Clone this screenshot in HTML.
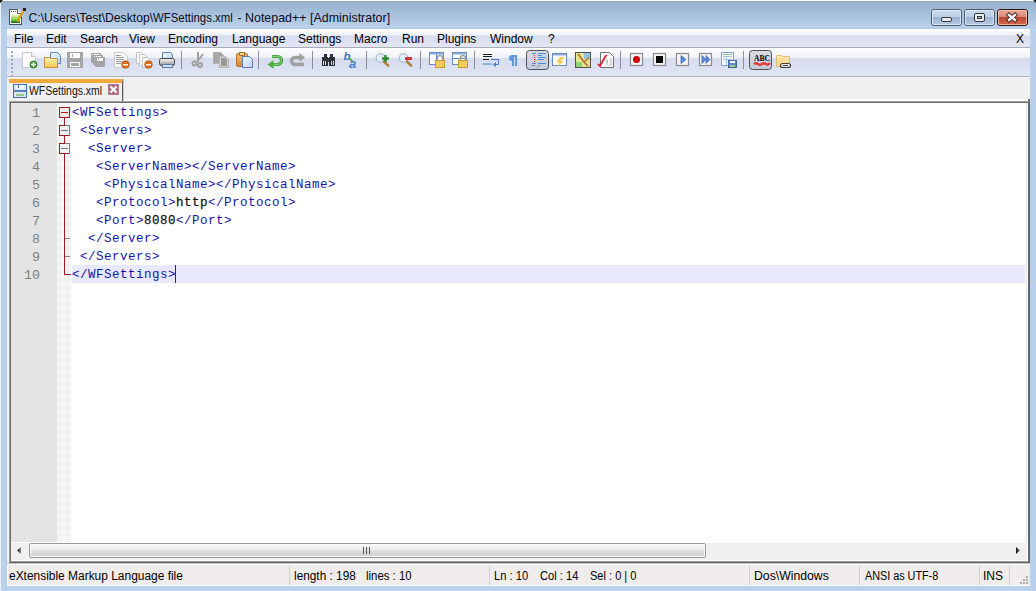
<!DOCTYPE html>
<html><head><meta charset="utf-8">
<style>
*{margin:0;padding:0;box-sizing:border-box}
html,body{width:1036px;height:591px;overflow:hidden}
body{position:relative;background:#b9d1ea;font-family:"Liberation Sans",sans-serif;font-size:12px;color:#000}
.a{position:absolute}
#title{left:0;top:0;width:1036px;height:29px;background:linear-gradient(#f8fafc 0,#f8fafc 1px,#98a9be 1px,#98a9be 2px,#97b0cd 2px,#b9d1ea 27px,#b0c8e2 28px,#b9d1ea 29px)}
#ttext{left:28.5px;top:11px;font-size:12.2px;color:#0b0b1e;white-space:nowrap;line-height:14px}
#menu{left:7px;top:29px;width:1023px;height:19px;background:linear-gradient(#fefefe 0,#eff1f7 6px,#d6dbee 7px,#e3e7f5 18px);border-bottom:1px solid #a9adb9}
#menu span{position:absolute;top:3.4px;line-height:14px;white-space:nowrap}
#tool{left:7px;top:48px;width:1023px;height:29px;background:linear-gradient(#ffffff 0,#eef0f7 10px,#d6dbee 10px,#e1e6f5 28px);border-bottom:1px solid #aeb2be}

#edit{left:9px;top:101px;width:1021px;height:462px;background:#fff;border-top:1px solid #a0a0a0;border-left:1px solid #a0a0a0;border-right:1px solid #5e646a;border-bottom:1px solid #646464}
#edit2{left:10px;top:102px;width:1019px;height:460px;border-top:1px solid #696969;border-left:1px solid #696969;border-right:1px solid #62676c;border-bottom:1px solid #a0a0a0}
#hscroll{left:11px;top:542px;width:1016px;height:18px;background:#f0f0f0;border-top:1px solid #fff}
#thumb{left:29px;top:543px;width:677px;height:15px;border:1px solid #979797;border-radius:2px;background:linear-gradient(#f7f7f7 0,#ececec 6px,#dadada 7px,#d2d2d2 13px);box-shadow:inset 0 0 0 1px #fafafa}
#status{left:7px;top:563px;width:1023px;height:23px;background:#f0ecec;border-top:1px solid #c4c4c4;box-shadow:inset 0 1px 0 #fbfbfb,inset 0 -1px 0 #fafafa,inset 1px 0 0 #fafafa}
#status span{position:absolute;top:5px;line-height:14px;white-space:nowrap}
.sep{position:absolute;top:1px;width:1px;height:20px;background:#d3d0cb}

#lnm{left:11px;top:103px;width:46px;height:439px;background:#e4e4e4}
#fold{left:57px;top:103px;width:14px;height:439px;background-color:#fff;background-image:repeating-conic-gradient(#ececec 0 25%,#fff 0 50%);background-size:2px 2px}
#code{left:72px;top:104px;font-family:"Liberation Mono",monospace;font-size:12.5px;letter-spacing:0.5px;line-height:18px;white-space:pre;color:#1414a8}
#code b{color:#111;font-weight:normal;-webkit-text-stroke:0.25px #111}
#lnum{left:11px;top:105px;width:29px;text-align:right;font-family:"Liberation Mono",monospace;font-size:13.33px;line-height:18px;white-space:pre;color:#808080}
#curl{left:72px;top:265px;width:953px;height:18px;background:#e8e8ff}
#caret{left:175px;top:265px;width:1px;height:18px;background:#3c12a4}

#tabbar{left:7px;top:77px;width:1023px;height:486px;background:#f0f0f0;border-top:1px solid #f2f2f2}
#tab{left:9px;top:79px;width:114px;height:22px;background:#f0f0f0;border-top:4px solid #f2a93b;border-right:1px solid #5c5c5c;box-shadow:1px 0 0 #c8c8c8}
#tabtext{left:29px;top:84px;line-height:14px;white-space:nowrap;transform:scaleX(0.87);transform-origin:0 0;color:#111}
.tt{top:11px;font-size:12.2px;color:#0b0b1e;white-space:nowrap;line-height:14px;transform-origin:0 0}
</style></head><body>
<div id="title" class="a"></div><svg class="a" style="left:0;top:0" width="1036" height="4"><path d="M0 0 H3 L0 3 Z" fill="#1a1a1a"/><path d="M1036 0 H1033 L1036 3 Z" fill="#1a1a1a"/></svg><div class="a" style="left:0;top:3px;width:1px;height:588px;background:#eaf2fa"></div><div class="a" style="left:7px;top:77px;width:1px;height:486px;background:#fff"></div>
<svg class="a" style="left:0;top:0" width="1036" height="29">
<defs>
<linearGradient id="gmin" x1="0" y1="0" x2="0" y2="1"><stop offset="0" stop-color="#cbdbed"/><stop offset="0.45" stop-color="#bccfe5"/><stop offset="0.46" stop-color="#98b2cf"/><stop offset="1" stop-color="#b9cde4"/></linearGradient>
<linearGradient id="gcls" x1="0" y1="0" x2="0" y2="1"><stop offset="0" stop-color="#eaa898"/><stop offset="0.45" stop-color="#dc8a78"/><stop offset="0.46" stop-color="#b9442a"/><stop offset="1" stop-color="#d86a50"/></linearGradient>
<linearGradient id="ggrn" x1="0" y1="0" x2="0" y2="1"><stop offset="0" stop-color="#e8f49a"/><stop offset="0.6" stop-color="#78d040"/><stop offset="1" stop-color="#106010"/></linearGradient>
</defs>

<g>
<rect x="931.5" y="9.5" width="30" height="16" rx="2.5" fill="url(#gmin)" stroke="#4f5d70"/>
<rect x="932.5" y="10.5" width="28" height="14" rx="1.5" fill="none" stroke="#e4eefa" stroke-opacity="0.8"/>
<rect x="941.5" y="17.5" width="10" height="4" rx="1.5" fill="#efeceb" stroke="#2e3440"/>
<rect x="964.5" y="9.5" width="30" height="16" rx="2.5" fill="url(#gmin)" stroke="#4f5d70"/>
<rect x="965.5" y="10.5" width="28" height="14" rx="1.5" fill="none" stroke="#e4eefa" stroke-opacity="0.8"/>
<rect x="974.5" y="13.5" width="10" height="8" rx="1.5" fill="#efeceb" stroke="#2e3440"/>
<rect x="977.5" y="16.5" width="4" height="2" fill="#b8c4d4" stroke="#2e3440"/>
<rect x="997.5" y="9.5" width="30" height="16" rx="2.5" fill="url(#gcls)" stroke="#2a1616"/>
<rect x="998.5" y="10.5" width="28" height="14" rx="1.5" fill="none" stroke="#f6c8b8" stroke-opacity="0.8"/>
<path d="M1009 15 L1015 20 M1015 15 L1009 20" stroke="#3a2020" stroke-width="4.2" stroke-linecap="square"/>
<path d="M1009 15 L1015 20 M1015 15 L1009 20" stroke="#f4f2f2" stroke-width="2.4" stroke-linecap="square"/>
</g>
<g>
<rect x="9.5" y="9.5" width="12" height="15" fill="#fff" stroke="#4a5058"/>
<path d="M17 9 L22 14 V9 Z" fill="#b6c8de"/>
<path d="M17.5 9.5 V13.5 H21.5" fill="#fff" stroke="#4a5058"/>
<rect x="11" y="11" width="1" height="1" fill="#606060"/><rect x="13" y="11" width="1" height="1" fill="#606060"/><rect x="15" y="11" width="1" height="1" fill="#606060"/>
<rect x="11" y="15" width="9" height="8" fill="url(#ggrn)"/>
<path d="M24 9.5 L17.5 21.5" stroke="#d8a020" stroke-width="2.6"/>
<path d="M24.5 9 L22.5 12" stroke="#ffd860" stroke-width="1"/>
<rect x="23" y="8" width="3" height="3" fill="#2a1430"/>
</g>
</svg>
<div id="ttext" class="a">C:\Users\Test\Desktop\</div>
<div class="a tt" style="left:153px;transform:scaleX(0.935)">WFSettings.xml</div>
<div class="a tt" style="left:237.5px">-</div>
<div class="a tt" style="left:244.5px;transform:scaleX(1.02)">Notepad++ [Administrator]</div>
<div id="menu" class="a">
<span style="left:7px">File</span>
<span style="left:39px">Edit</span>
<span style="left:73px">Search</span>
<span style="left:122px">View</span>
<span style="left:161px">Encoding</span>
<span style="left:225px">Language</span>
<span style="left:291px">Settings</span>
<span style="left:347px">Macro</span>
<span style="left:395px">Run</span>
<span style="left:430px">Plugins</span>
<span style="left:483px">Window</span>
<span style="left:541px">?</span>
<span style="left:1009px">X</span>
</div>
<div id="tool" class="a"></div>
<svg class="a" style="left:0;top:0" width="1036" height="80">
<defs>
<linearGradient id="tyel" x1="0" y1="0" x2="0" y2="1"><stop offset="0" stop-color="#fff2b0"/><stop offset="1" stop-color="#f4c850"/></linearGradient>
<linearGradient id="tblu" x1="0" y1="0" x2="1" y2="1"><stop offset="0" stop-color="#f0f8ff"/><stop offset="1" stop-color="#b8d4f4"/></linearGradient>
<linearGradient id="torg" x1="0" y1="0" x2="0" y2="1"><stop offset="0" stop-color="#f4c070"/><stop offset="1" stop-color="#d08a30"/></linearGradient>
<linearGradient id="tprn" x1="0" y1="0" x2="0" y2="1"><stop offset="0" stop-color="#f8f8f8"/><stop offset="0.5" stop-color="#c8c8c8"/><stop offset="1" stop-color="#909090"/></linearGradient>
<linearGradient id="tbtn" x1="0" y1="0" x2="0" y2="1"><stop offset="0" stop-color="#d8dbe2"/><stop offset="1" stop-color="#c4c9d4"/></linearGradient>
<linearGradient id="tgrn" x1="0" y1="0" x2="0" y2="1"><stop offset="0" stop-color="#8cd880"/><stop offset="1" stop-color="#3c9c34"/></linearGradient>
</defs>
<!-- grip -->
<g fill="#a0a6b4"><rect x="11" y="51" width="2" height="2"/><rect x="11" y="55" width="2" height="2"/><rect x="11" y="59" width="2" height="2"/><rect x="11" y="63" width="2" height="2"/><rect x="11" y="67" width="2" height="2"/><rect x="11" y="71" width="2" height="2"/><rect x="11" y="75" width="2" height="1"/></g>
<!-- separators -->
<g fill="#8a8e98"><rect x="181" y="51" width="1" height="18"/><rect x="258" y="51" width="1" height="18"/><rect x="312" y="51" width="1" height="18"/><rect x="366" y="51" width="1" height="18"/><rect x="420" y="51" width="1" height="18"/><rect x="474" y="51" width="1" height="18"/><rect x="620" y="51" width="1" height="18"/><rect x="743" y="51" width="1" height="18"/></g>
<!-- 1 new -->
<path d="M22.5 52.5 H31.5 L35.5 56.5 V67.5 H22.5 Z" fill="#fdfdfd" stroke="#c8c8c8"/>
<path d="M31.5 52.5 V56.5 H35.5" fill="#eee" stroke="#c8c8c8"/>
<circle cx="33.5" cy="64.5" r="3.5" fill="#46a03e" stroke="#2a7426" stroke-width="0.9"/>
<path d="M33.5 62 V67 M31 64.5 H36" stroke="#e8f8e0" stroke-width="1.4"/>
<!-- 2 open -->
<path d="M50.5 52.5 H57.5 L60.5 55.5 V63.5 H50.5 Z" fill="url(#tblu)" stroke="#6684b4"/>
<path d="M44.5 57.5 H49.5 L50.5 58.5 H57.5 V67.5 H44.5 Z" fill="url(#tyel)" stroke="#cc9040"/>
<!-- 3 save gray -->
<rect x="67" y="52" width="16" height="16" fill="#a4a4a4"/>
<rect x="70" y="53" width="10" height="5" fill="#fafafa"/><rect x="72" y="54" width="1" height="3" fill="#a4a4a4"/>
<rect x="70" y="62" width="10" height="5" fill="#fafafa"/><rect x="71" y="63" width="8" height="3" fill="#a4a4a4"/>
<!-- 4 save all -->
<rect x="91" y="53" width="10" height="10" fill="#a4a4a4"/>
<rect x="93" y="55" width="10" height="10" fill="#a4a4a4" stroke="#fafafa" stroke-width="0"/>
<rect x="95" y="57" width="10" height="10" fill="#a4a4a4"/>
<rect x="92" y="54" width="1" height="1" fill="#fff"/><rect x="94" y="54" width="5" height="1" fill="#fff"/>
<rect x="94" y="56" width="1" height="1" fill="#fff"/><rect x="96" y="56" width="5" height="1" fill="#fff"/>
<rect x="97" y="58" width="6" height="3" fill="#fafafa"/><rect x="98" y="58" width="1" height="2" fill="#a4a4a4"/>
<!-- 5 close -->
<path d="M114.5 52.5 H123.5 L127.5 56.5 V67.5 H114.5 Z" fill="#fdfdfd" stroke="#c8c8c8"/>
<g fill="#9a9a9a"><rect x="116" y="55" width="5" height="1"/><rect x="116" y="57" width="8" height="1"/><rect x="116" y="59" width="8" height="1"/><rect x="116" y="61" width="6" height="1"/><rect x="116" y="63" width="5" height="1"/></g>
<circle cx="125.5" cy="64.5" r="3.8" fill="#e07020" stroke="#b05010" stroke-width="0.8"/>
<rect x="123" y="64" width="5" height="1.4" fill="#fff"/>
<!-- 6 close all -->
<path d="M136.5 52.5 H141.5 L143.5 54.5 V63.5 H136.5 Z" fill="#fbfbfb" stroke="#c4c4c4"/>
<path d="M139.5 54.5 H144.5 L147.5 57.5 V65.5 H139.5 Z" fill="#fbfbfb" stroke="#c4c4c4"/>
<path d="M142.5 57.5 H147.5 L150.5 60.5 V67.5 H142.5 Z" fill="#fbfbfb" stroke="#c4c4c4"/>
<circle cx="148.5" cy="64.5" r="3.8" fill="#e07020" stroke="#b05010" stroke-width="0.8"/>
<rect x="146" y="64" width="5" height="1.4" fill="#fff"/>
<!-- 7 print -->
<path d="M162.5 52.5 H170.5 L172.5 54.5 V59.5 H162.5 Z" fill="url(#tblu)" stroke="#5a7ab0"/>
<rect x="159.5" y="58.5" width="15" height="7" rx="2" fill="url(#tprn)" stroke="#404448"/>
<rect x="162.5" y="64.5" width="10" height="3" fill="#c8e4f8" stroke="#5a7ab0"/>
<!-- 8 cut -->
<g fill="none" stroke="#a0a0a0" stroke-width="2">
<path d="M198 52 V61"/><path d="M203 54 L197 62"/>
<circle cx="194.5" cy="63.5" r="2"/><circle cx="200" cy="65" r="2"/>
</g>
<!-- 9 copy -->
<path d="M213.5 52.5 H220.5 L223.5 55.5 V63.5 H213.5 Z" fill="#a0a0a0" stroke="#b0b0b0"/>
<rect x="214" y="53" width="6" height="10" fill="#a8a8a8"/>
<path d="M219.5 56.5 H225.5 L228.5 59.5 V67.5 H219.5 Z" fill="#a0a0a0" stroke="#b4b4b4" stroke-width="1"/>
<path d="M220.5 57.5 H225 L227.5 60 V66.5 H220.5 Z" fill="#999" stroke="#fafafa" stroke-width="0.6"/>
<!-- 10 paste -->
<rect x="236.5" y="53.5" width="11" height="13" rx="1.5" fill="url(#torg)" stroke="#b07028"/>
<rect x="239.5" y="52.5" width="5" height="3" fill="#f0d090" stroke="#b07028"/>
<path d="M242.5 56.5 H249.5 L252.5 59.5 V67.5 H242.5 Z" fill="url(#tblu)" stroke="#5a7ab0"/>
<!-- 11 undo -->
<path d="M272 56.5 H277.5 A4 4 0 0 1 277.5 64.5 H272" fill="none" stroke="#3c9c34" stroke-width="3.2"/>
<path d="M272 56.5 H277.5 A4 4 0 0 1 277.5 64.5 H272" fill="none" stroke="#7cd070" stroke-width="1.4"/>
<path d="M267.5 64.5 L273.5 60 V69 Z" fill="#4cae44"/>
<!-- 12 redo -->
<path d="M301 57.5 H295 A3.5 3.5 0 0 0 295 64.5 H304" fill="none" stroke="#a0a0a0" stroke-width="3.4"/>
<path d="M305 57.5 L299.5 53 V62 Z" fill="#a0a0a0"/>
<!-- 13 find -->
<g fill="#2c3038"><rect x="324" y="54" width="3" height="3"/><rect x="330" y="54" width="3" height="3"/><rect x="322" y="57" width="6" height="9"/><rect x="329" y="57" width="6" height="9"/><rect x="327" y="58" width="3" height="4"/></g>
<g fill="#d8dce4"><rect x="323" y="61" width="1" height="4"/><rect x="325" y="61" width="1" height="4"/><rect x="331" y="61" width="1" height="4"/><rect x="333" y="61" width="1" height="4"/></g>
<!-- 14 replace -->
<text x="343.5" y="60" font-family="Liberation Sans" font-style="italic" font-weight="bold" font-size="11.5" fill="#3c78cc">b</text>
<text x="349" y="67.5" font-family="Liberation Sans" font-style="italic" font-weight="bold" font-size="13" fill="#3c80d8">a</text>
<path d="M349 58 L353 62" stroke="#40a040" stroke-width="1.6"/>
<!-- 15 zoom in -->
<circle cx="380.5" cy="58" r="4.3" fill="#e4eef8" stroke="#a8c0dc" stroke-width="1.2"/>
<path d="M384 61.5 L388 65.5" stroke="#b08040" stroke-width="2.6" stroke-linecap="round"/>
<path d="M385.5 55 V62 M382 58.5 H389" stroke="#2e8a2a" stroke-width="2.4"/>
<!-- 16 zoom out -->
<circle cx="403.5" cy="58" r="4.3" fill="#e4eef8" stroke="#a8c0dc" stroke-width="1.2"/>
<path d="M407 61.5 L411 65.5" stroke="#b08040" stroke-width="2.6" stroke-linecap="round"/>
<rect x="405" y="57" width="7" height="3" fill="#d83040"/>
<!-- 17 sync v -->
<rect x="429.5" y="52.5" width="14" height="12" fill="#fff" stroke="#6a8ac0"/>
<rect x="430" y="53" width="13" height="1.5" fill="#8aaee0"/>
<rect x="436" y="54" width="1" height="10" fill="#6a8ac0"/>
<path d="M437.5 60 V58 A2.5 2.5 0 0 1 442.5 58 V60" fill="none" stroke="#a0a0a0" stroke-width="1.5"/>
<rect x="435.5" y="60.5" width="9" height="7" fill="#f0cc60" stroke="#c89830"/>
<!-- 18 sync h -->
<rect x="452.5" y="52.5" width="14" height="12" fill="#fff" stroke="#6a8ac0"/>
<rect x="453" y="53" width="13" height="1.5" fill="#8aaee0"/>
<rect x="453" y="58" width="13" height="1" fill="#6a8ac0"/>
<path d="M460.5 60 V58 A2.5 2.5 0 0 1 465.5 58 V60" fill="none" stroke="#a0a0a0" stroke-width="1.5"/>
<rect x="458.5" y="60.5" width="9" height="7" fill="#f0cc60" stroke="#c89830"/>
<!-- 19 wrap -->
<g fill="#1a1a1a"><rect x="483" y="54" width="9" height="1"/><rect x="483" y="56" width="9" height="1"/><rect x="483" y="59" width="6" height="1"/></g>
<rect x="483" y="63" width="9" height="2" fill="#8ab4e4"/>
<path d="M491 59.5 H498.5 V64.5 H495" fill="none" stroke="#4a7ab8" stroke-width="1"/>
<path d="M493 64.5 L496 62 V67 Z" fill="#4a7ab8"/>
<!-- 20 pilcrow -->
<path d="M512 55 H517 V66 H515 V57 H514 V66 H512 V61 A3 3 0 0 1 512 55 Z" fill="#5a9ae0"/>
<!-- 21 indent guide button -->
<rect x="526.5" y="50.5" width="22" height="19" rx="3" fill="url(#tbtn)" stroke="#4c5058"/>
<g fill="#4a90e0"><rect x="532" y="53" width="4" height="1"/><rect x="538" y="53" width="8" height="1"/><rect x="538" y="55" width="4" height="1"/><rect x="538" y="57" width="8" height="1"/><rect x="538" y="59" width="6" height="1"/><rect x="532" y="63" width="4" height="1"/><rect x="538" y="63" width="8" height="1"/><rect x="532" y="65" width="3" height="1"/><rect x="538" y="65" width="2" height="1"/><rect x="537" y="67" width="1" height="1"/></g>
<g fill="#e02020"><rect x="534" y="55" width="1" height="1"/><rect x="534" y="57" width="1" height="1"/><rect x="534" y="59" width="1" height="1"/><rect x="534" y="61" width="1" height="1"/></g>
<!-- 22 doc map -->
<rect x="552.5" y="53.5" width="14" height="12" fill="#fff" stroke="#6a8ac0"/>
<rect x="553" y="54" width="13" height="1.5" fill="#8aaee0"/>
<path d="M556 62 L560 57 H565 L561 61 H564 L557 67 L559 63 Z" fill="#f4d060"/>
<!-- 23 map -->
<rect x="575.5" y="52.5" width="15" height="15" fill="#dfe890" stroke="#505050"/>
<rect x="584" y="53" width="6" height="6" fill="#90c0e0"/>
<rect x="576" y="62" width="6" height="5" fill="#90d070"/>
<path d="M578 54 L584 62 L588 66 M584 62 L589 58" stroke="#c06030" stroke-width="1.5" fill="none"/>
<!-- 24 function list -->
<path d="M600.5 52.5 H609.5 L613.5 56.5 V67.5 H600.5 Z" fill="#fdfdfd" stroke="#707070"/>
<path d="M606 62 H608 M607 59 V65 M610 59 H611 V65 H610" stroke="#b0b0b0" fill="none"/>
<path d="M598 64 L600 66 L605 57 Q606 55 607 56" stroke="#e02030" stroke-width="1.8" fill="none"/>
<!-- 25 record -->
<rect x="630.5" y="53.5" width="12" height="12" fill="#f4f4f6" stroke="#8a8a8a" stroke-width="1.2"/>
<circle cx="636.5" cy="59.5" r="3.5" fill="#d00000"/>
<!-- 26 stop -->
<rect x="653.5" y="53.5" width="12" height="12" fill="#f4f4f6" stroke="#8a8a8a" stroke-width="1.2"/>
<rect x="656" y="56" width="7" height="7" fill="#000"/>
<!-- 27 play -->
<rect x="676.5" y="53.5" width="12" height="12" fill="#f4f4f6" stroke="#8a8a8a" stroke-width="1.2"/>
<path d="M681 55.5 L686 59.5 L681 63.5 Z" fill="#5a8ad8" stroke="#3a6ab8" stroke-width="0.8"/>
<!-- 28 play multi -->
<rect x="699.5" y="53.5" width="12" height="12" fill="#f4f4f6" stroke="#8a8a8a" stroke-width="1.2"/>
<path d="M702 55.5 L706 59.5 L702 63.5 Z M706 55.5 L710 59.5 L706 63.5 Z" fill="#5a8ad8" stroke="#3a6ab8" stroke-width="0.8"/>
<!-- 29 save macro -->
<rect x="721.5" y="52.5" width="12" height="13" fill="#f4f8fc" stroke="#80a4d0"/>
<g fill="#a8c4e4"><rect x="723" y="56" width="9" height="1"/><rect x="723" y="59" width="9" height="1"/><rect x="726" y="56" width="1" height="9"/></g>
<rect x="723" y="54" width="9" height="1" fill="#90c888"/>
<rect x="728.5" y="60.5" width="8" height="7" fill="#5a88c8" stroke="#3a68a8"/>
<rect x="730" y="61" width="5" height="2" fill="#fff"/>
<rect x="730" y="65" width="5" height="2" fill="#a0d088"/>
<!-- 30 ABC button -->
<rect x="749.5" y="50.5" width="22" height="19" rx="3" fill="url(#tbtn)" stroke="#4c5058"/>
<text x="754" y="60.5" font-family="Liberation Serif" font-weight="bold" font-size="9" textLength="16" lengthAdjust="spacingAndGlyphs" fill="#000">ABC</text>
<path d="M754 64 Q756 62.5 758 64 T762 64 T766 64 T770 63" stroke="#e03838" stroke-width="2.2" fill="none"/>
<!-- 31 folder -->
<path d="M776.5 55.5 H781.5 L782.5 56.5 H789.5 V66.5 H776.5 Z" fill="#fbe8a8" stroke="#e0c070"/>
<rect x="777" y="59" width="12" height="7" fill="#f8dc90"/>
<rect x="780.5" y="63.5" width="10" height="4" rx="2" fill="#e8e8e8" stroke="#404040" stroke-width="1.2"/>
<rect x="783" y="65" width="5" height="1" fill="#404040"/>
</svg>

<div id="tabbar" class="a"></div>
<div id="tab" class="a"></div>
<svg class="a" style="left:13px;top:84px" width="14" height="14" shape-rendering="crispEdges">
<rect x="0.5" y="0.5" width="13" height="13" rx="1" fill="#d8e6f6" stroke="#4a6ea8"/>
<rect x="3" y="1" width="8" height="4" fill="#f4f8fc"/>
<rect x="5" y="1" width="1" height="3" fill="#4a6ea8"/>
<rect x="1" y="6" width="12" height="2" fill="#5a86c6"/>
<rect x="3" y="10" width="8" height="2" fill="#9cc488"/>
</svg>
<div id="tabtext" class="a">WFSettings.xml</div>
<svg class="a" style="left:108px;top:84px" width="11" height="11" shape-rendering="crispEdges">
<rect x="0" y="0" width="11" height="11" fill="#a86a7c"/>
<rect x="0.5" y="0.5" width="10" height="10" fill="none" stroke="#b47e8e"/>
<path d="M2.5 2.5 L8.5 8.5 M8.5 2.5 L2.5 8.5" stroke="#fff" stroke-width="2.2" shape-rendering="auto"/>
</svg>
<div id="edit" class="a"></div><div id="edit2" class="a"></div><div class="a" style="left:1026px;top:103px;width:1px;height:439px;background:#e2e2e2"></div><div class="a" style="left:1028px;top:99px;width:2px;height:2px;background:#62676c"></div><div class="a" style="left:124px;top:99px;width:904px;height:2px;background:#fbfbfb"></div>
<div id="lnm" class="a"></div>
<div id="fold" class="a"></div>
<svg class="a" style="left:0;top:0" width="1036" height="591" shape-rendering="crispEdges">
<g fill="none" stroke-width="1">
<rect x="59.5" y="107.5" width="10" height="10" fill="#fbe6e6" stroke="#a01c24"/>
<rect x="60" y="108" width="9" height="4" fill="#eeeeee" stroke="none"/>
<line x1="61" y1="112.5" x2="68" y2="112.5" stroke="#a01c24"/>
<line x1="64.5" y1="118" x2="64.5" y2="125" stroke="#a01c24"/>
<rect x="59.5" y="125.5" width="10" height="10" fill="#f1f1f1" stroke="#7a7a7a"/>
<path d="M59.5 125 V135.5 H69 M59 125.5 H65" stroke="#a01c24"/>
<line x1="61" y1="130.5" x2="68" y2="130.5" stroke="#707070"/>
<line x1="64.5" y1="136" x2="64.5" y2="143" stroke="#a01c24"/>
<rect x="59.5" y="143.5" width="10" height="10" fill="#f1f1f1" stroke="#7a7a7a"/>
<path d="M59.5 143 V153.5 H69 M59 143.5 H65" stroke="#a01c24"/>
<line x1="61" y1="148.5" x2="68" y2="148.5" stroke="#707070"/>
<line x1="64.5" y1="154" x2="64.5" y2="275" stroke="#a01c24"/>
<line x1="65" y1="238.5" x2="70" y2="238.5" stroke="#808080"/>
<line x1="65" y1="256.5" x2="70" y2="256.5" stroke="#808080"/>
<line x1="65" y1="274.5" x2="71" y2="274.5" stroke="#a01c24"/>
</g></svg>
<div id="curl" class="a"></div>
<div id="lnum" class="a">1
2
3
4
5
6
7
8
9
10</div>
<div id="code" class="a">&lt;WFSettings&gt;
 &lt;Servers&gt;
  &lt;Server&gt;
   &lt;ServerName&gt;&lt;/ServerName&gt;
    &lt;PhysicalName&gt;&lt;/PhysicalName&gt;
   &lt;Protocol&gt;<b>http</b>&lt;/Protocol&gt;
   &lt;Port&gt;<b>8080</b>&lt;/Port&gt;
  &lt;/Server&gt;
 &lt;/Servers&gt;
&lt;/WFSettings&gt;</div>
<div id="caret" class="a"></div>
<div id="hscroll" class="a"></div>
<div id="thumb" class="a"></div>
<svg class="a" style="left:0;top:540px" width="1036" height="20">
<defs><linearGradient id="arl" x1="0" y1="0" x2="1" y2="0"><stop offset="0" stop-color="#111"/><stop offset="1" stop-color="#8a8a8a"/></linearGradient><linearGradient id="arr" x1="0" y1="0" x2="1" y2="0"><stop offset="0" stop-color="#111"/><stop offset="1" stop-color="#7a7a7a"/></linearGradient></defs><path d="M17 10.5 L21 7 V14 Z" fill="url(#arl)"/>
<path d="M1020 10.5 L1016 7 V14 Z" fill="url(#arr)"/>
<g stroke="#555" stroke-width="1" shape-rendering="crispEdges"><line x1="363.5" y1="7" x2="363.5" y2="14"/><line x1="366.5" y1="7" x2="366.5" y2="14"/><line x1="369.5" y1="7" x2="369.5" y2="14"/></g>
</svg>
<div id="status" class="a">
<span style="left:1.5px;transform:scaleX(0.995);transform-origin:0 0">eXtensible Markup Language file</span>
<div class="sep" style="left:282px"></div>
<span style="left:287px;transform:scaleX(0.985);transform-origin:0 0">length : 198</span>
<span style="left:359px;transform:scaleX(0.95);transform-origin:0 0">lines : 10</span>
<div class="sep" style="left:482px"></div>
<span style="left:487px;transform:scaleX(0.93);transform-origin:0 0">Ln : 10</span>
<span style="left:533px;transform:scaleX(0.93);transform-origin:0 0">Col : 14</span>
<span style="left:583px;transform:scaleX(0.92);transform-origin:0 0">Sel : 0 | 0</span>
<div class="sep" style="left:742px"></div>
<span style="left:747px;transform:scaleX(1.02);transform-origin:0 0">Dos\Windows</span>
<div class="sep" style="left:852px"></div>
<span style="left:858px;transform:scaleX(0.9);transform-origin:0 0">ANSI as UTF-8</span>
<div class="sep" style="left:972px"></div>
<span style="left:976px;transform:scaleX(1.0);transform-origin:0 0">INS</span>
<div class="sep" style="left:1002px"></div>
<svg class="a" style="left:1010px;top:10px" width="12" height="12"><g fill="#b0aca6"><rect x="9" y="2" width="2" height="2"/><rect x="6" y="5" width="2" height="2"/><rect x="9" y="5" width="2" height="2"/><rect x="3" y="8" width="2" height="2"/><rect x="6" y="8" width="2" height="2"/><rect x="9" y="8" width="2" height="2"/></g></svg>
</div>
</body></html>
